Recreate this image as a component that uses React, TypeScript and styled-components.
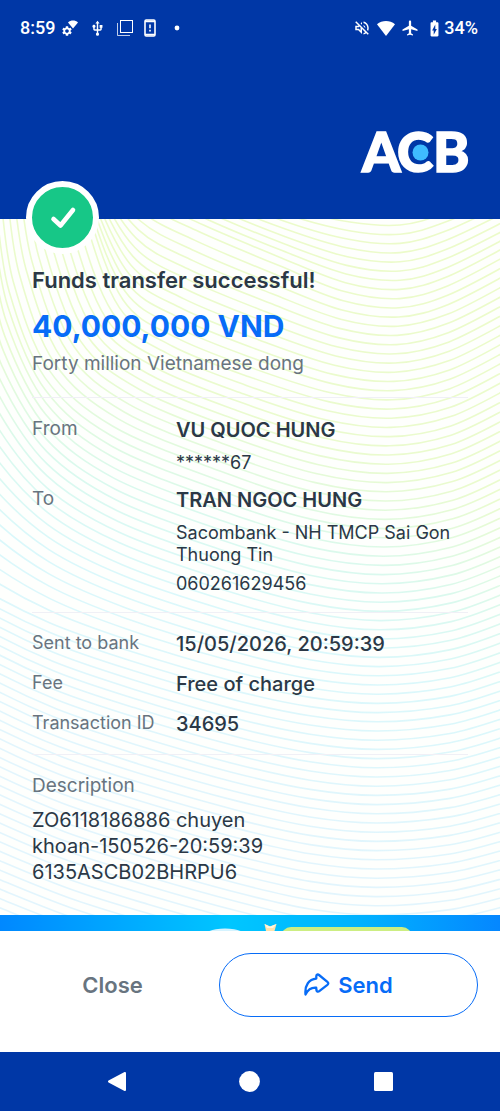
import React from "react";
import styled, { createGlobalStyle, css } from "styled-components";
import { MdAirplanemodeActive, MdBatteryChargingFull, MdOutlineVolumeOff, MdSettings, MdUsb } from "react-icons/md";

const color = {
  navy: "#0037a6",
  blue: "#076cf7",
  ink: "#2b3846",
  muted: "#68747f",
  line: "#f0f0f6",
  green: "#17c787",
  dot: "#3fbcff",
};

const GlobalStyle = createGlobalStyle`
  *, *::before, *::after { box-sizing: border-box; }
  body { margin: 0; background: #fff; font-family: Inter, "Liberation Sans", sans-serif; color: ${color.ink}; }
  h1, p, dl, dd { margin: 0; }
  button { font: inherit; border: 0; padding: 0; background: none; cursor: pointer; }
  svg { display: block; }
`;

const Screen = styled.div`
  display: flex;
  flex-direction: column;
  min-height: 100vh;
`;

const Header = styled.header`
  display: flex;
  flex-direction: column;
  background: ${color.navy};
  color: #fff;
`;

const StatusBar = styled.div`
  display: flex;
  justify-content: space-between;
  align-items: center;
  height: 56px;
  padding: 0 22px 0 20px;
  font-size: 18px;
  font-weight: 500;
  line-height: 20px;
  font-family: Roboto, Inter, sans-serif;
`;

const StatusGroup = styled.div<{ $gap: number }>`
  display: flex;
  align-items: center;
  gap: ${({ $gap }) => $gap}px;
`;

const TimeGroup = styled.div`
  display: flex;
  align-items: center;
  gap: 7px;
`;

const BatteryGroup = styled.div`
  display: flex;
  align-items: center;
`;

const Brand = styled.div`
  display: flex;
  justify-content: flex-end;
  padding: 60px 28px 31px;
`;

const Receipt = styled.main`
  position: relative;
  flex: 1;
  padding: 48px 32px 30px;
  background: #fefffd;
`;

const WaveLayer = styled.svg`
  position: absolute;
  inset: 0;
  width: 100%;
  height: 100%;
`;

const SuccessBadge = styled.div`
  position: absolute;
  top: -38px;
  left: 26px;
  display: grid;
  place-items: center;
  width: 73px;
  height: 73px;
  border: 6px solid #fff;
  border-radius: 50%;
  background: ${color.green};
`;

const Content = styled.div`
  position: relative;
`;

const Title = styled.h1`
  font-size: 22px;
  font-weight: 600;
  line-height: 26px;
`;

const Amount = styled.p`
  margin-top: 15px;
  font-size: 30px;
  font-weight: 700;
  line-height: 36px;
  color: ${color.blue};
`;

const Words = styled.p`
  margin-top: 8px;
  font-size: 19px;
  line-height: 24px;
  color: ${color.muted};
`;

const section = css`
  border-top: 1px solid ${color.line};
  padding: 19px 0 17px;
`;

const Parties = styled.dl`
  ${section}
  display: grid;
  gap: 13px;
  margin-top: 21px;
`;

const Facts = styled.dl`
  ${section}
  padding-top: 18px;
  display: grid;
  gap: 14px;
`;

const Note = styled.dl`
  ${section}
  padding-bottom: 0;
`;

const Row = styled.div`
  display: grid;
  grid-template-columns: 144px 1fr;
`;

const Label = styled.dt<{ $small?: boolean }>`
  font-size: ${({ $small }) => ($small ? 18 : 19)}px;
  line-height: 24px;
  color: ${color.muted};
`;

const Party = styled.dd`
  display: grid;
`;

const PartyName = styled.span`
  font-size: 20px;
  font-weight: 600;
  line-height: 26px;
  margin-bottom: 2px;
`;

const PartyLine = styled.span`
  margin-top: 7px;
  font-size: 18px;
  line-height: 22px;
`;

const Fact = styled.dd`
  font-size: 20px;
  font-weight: 500;
  line-height: 26px;
`;

const NoteText = styled.dd`
  margin-top: 9px;
  font-size: 20px;
  line-height: 26px;
`;

const Banner = styled.svg`
  width: 100%;
  height: 16px;
`;

const Actions = styled.footer`
  display: grid;
  grid-template-columns: 213fr 259fr;
  padding: 22px 22px 35px 6px;
  background: #fff;
`;

const ActionButton = styled.button<{ $outlined?: boolean }>`
  display: flex;
  align-items: center;
  justify-content: center;
  gap: 8px;
  height: 64px;
  border-radius: 32px;
  font-size: 22px;
  font-weight: 600;
  color: ${({ $outlined }) => ($outlined ? color.blue : color.muted)};
  ${({ $outlined }) => $outlined && css`border: 1px solid ${color.blue};`}
`;

const NavBar = styled.nav`
  display: flex;
  height: 59px;
  padding: 0 50px;
  background: ${color.navy};
`;

const NavButton = styled.button`
  flex: 1;
  display: grid;
  place-items: center;
`;

type Point = [number, number];
type KeyCurve = { level: number; points: Point[] };

const keyCurves: KeyCurve[] = [
  { level: 225, points: [[120, 60], [150, 120], [185, 158], [230, 185], [290, 208], [350, 222], [400, 225], [445, 213], [510, 184]] },
  { level: 295, points: [[80, 100], [105, 160], [145, 200], [200, 228], [280, 262], [345, 288], [400, 295], [448, 282], [510, 250]] },
  { level: 405, points: [[70, 130], [86, 210], [122, 305], [175, 343], [250, 373], [330, 398], [392, 405], [450, 394], [510, 364]] },
  { level: 515, points: [[-2, 205], [10, 285], [45, 372], [110, 430], [220, 476], [310, 505], [385, 515], [453, 505], [510, 480]] },
  { level: 705, points: [[-60, 560], [-20, 590], [50, 625], [130, 653], [230, 682], [310, 699], [378, 705], [450, 698], [510, 680]] },
  { level: 970, points: [[-30, 856], [0, 870], [70, 898], [150, 923], [240, 948], [310, 964], [375, 970], [450, 965], [510, 952]] },
];

const curveAt = (level: number): Point[] => {
  let i = 0;
  while (i < keyCurves.length - 2 && level > keyCurves[i + 1].level) i++;
  const a = keyCurves[i];
  const b = keyCurves[i + 1];
  const t = (level - a.level) / (b.level - a.level);
  return a.points.map(([x, y], k): Point => [x + (b.points[k][0] - x) * t, y + (b.points[k][1] - y) * t]);
};

const smoothPath = (p: Point[]) => {
  let d = `M${p[0][0].toFixed(1)} ${p[0][1].toFixed(1)}`;
  for (let i = 0; i < p.length - 1; i++) {
    const prev = p[Math.max(i - 1, 0)];
    const next = p[Math.min(i + 2, p.length - 1)];
    const c = [
      p[i][0] + (p[i + 1][0] - prev[0]) / 6,
      p[i][1] + (p[i + 1][1] - prev[1]) / 6,
      p[i + 1][0] - (next[0] - p[i][0]) / 6,
      p[i + 1][1] - (next[1] - p[i][1]) / 6,
      p[i + 1][0],
      p[i + 1][1],
    ];
    d += `C${c.map((n) => n.toFixed(1)).join(" ")}`;
  }
  return d;
};

const wavePath = Array.from({ length: 92 }, (_, k) => smoothPath(curveAt(225 + k * 9.2))).join("");

const Waves = () => (
  <WaveLayer viewBox="0 219 500 696" preserveAspectRatio="xMidYMin slice" aria-hidden="true">
    <defs>
      <linearGradient id="wave" gradientUnits="userSpaceOnUse" x1="330" y1="219" x2="130" y2="800">
        <stop offset="0" stopColor="#ecfbca" />
        <stop offset="0.34" stopColor="#eafbce" />
        <stop offset="0.52" stopColor="#daf9ee" />
        <stop offset="0.66" stopColor="#daf8fb" />
        <stop offset="1" stopColor="#e2f5fd" />
      </linearGradient>
    </defs>
    <path d={wavePath} fill="none" stroke="url(#wave)" strokeWidth="1.6" />
  </WaveLayer>
);

const GearWifiIcon = () => (
  <svg width="16" height="16" viewBox="0 0 16 16" fill="#fff" aria-hidden="true">
    <MdSettings x={-1} y={5} size={12} />
    <path d="M6 2.4C8.9-.2 13.1-.2 16 2.4L11 8.4Z" />
  </svg>
);

const WindowsIcon = () => (
  <svg width="16" height="16" viewBox="0 0 16 16" fill="none" stroke="#fff" aria-hidden="true">
    <rect x="3.5" y="0.5" width="12" height="12" />
    <path d="M0.5 3v12.5H13" opacity="0.75" />
  </svg>
);

const PhoneAlertIcon = () => (
  <svg width="12" height="18" viewBox="0 0 12 18" aria-hidden="true">
    <rect x="1" y="1" width="10" height="16" rx="1.2" fill="none" stroke="#fff" strokeWidth="1.6" />
    <path d="M1 2.4h10M1 15.6h10" stroke="#fff" strokeWidth="1.8" />
    <path d="M6 5.5v3.8M6 10.7v1.8" stroke="#fff" strokeWidth="1.6" />
  </svg>
);

const WifiIcon = () => (
  <svg width="18" height="15" viewBox="0 0 18 15" aria-hidden="true">
    <path d="M0 3.2C5.2-1 12.8-1 18 3.2L9 15Z" fill="#fff" />
  </svg>
);

const Logo = () => (
  <svg width="112" height="72" viewBox="0 0 112 72" role="img" aria-label="ACB">
    <g
      fill="#fff"
      stroke="#fff"
      strokeWidth="1.5"
      fontFamily="Lato, sans-serif"
      fontWeight="900"
      fontSize="55"
    >
      <text x="2" y="56">A</text>
      <text x="37" y="56">C</text>
      <text x="73" y="56">B</text>
    </g>
    <circle cx="60.5" cy="36.5" r="8" fill={color.dot} />
  </svg>
);

const CheckIcon = () => (
  <svg width="28" height="26" viewBox="0 0 28 26" fill="none" aria-hidden="true">
    <path d="M4.5 14L11.5 20.5L24 5" stroke="#fff" strokeWidth="4.6" strokeLinecap="round" strokeLinejoin="round" />
  </svg>
);

const ShareIcon = () => (
  <svg width="26" height="24" viewBox="0 0 26 24" fill="none" aria-hidden="true">
    <path
      d="M1.5 21.5C.6 12 5 6.3 12.3 5.6V3.2C12.3 1.5 13.8 1 15 2L23.4 8.8C24.6 9.8 24.6 10.8 23.4 11.8L15.3 18.2C14 19.2 12.6 18.6 12.4 17L12.2 14.7C7.6 14.3 4 16.5 1.5 21.5Z"
      stroke={color.blue}
      strokeWidth="2.3"
      strokeLinejoin="round"
    />
  </svg>
);

const PromoBanner = () => (
  <Banner viewBox="0 0 500 16" preserveAspectRatio="xMidYMin slice" aria-hidden="true">
    <defs>
      <linearGradient id="promo">
        <stop offset="0" stopColor="#0088ff" />
        <stop offset="0.46" stopColor="#00c6ff" />
        <stop offset="0.72" stopColor="#00b2ff" />
        <stop offset="1" stopColor="#0587ff" />
      </linearGradient>
    </defs>
    <rect width="500" height="16" fill="url(#promo)" />
    <ellipse cx="225" cy="24" rx="24" ry="10.5" fill="#d5f3ff" />
    <path d="M264.5 9L270 11.5L276.5 9L274.5 16H266Z" fill="#ffe3ad" />
    <path d="M264.5 9L270 11.5L276.5 9L273 13H267Z" fill="#fff6df" />
    <rect x="281" y="12" width="131" height="30" rx="10" fill="#cdee82" />
  </Banner>
);

const parties = [
  { label: "From", name: "VU QUOC HUNG", lines: ["******67"] },
  { label: "To", name: "TRAN NGOC HUNG", lines: ["Sacombank - NH TMCP Sai Gon Thuong Tin", "060261629456"] },
];

const facts = [
  { label: "Sent to bank", value: "15/05/2026, 20:59:39" },
  { label: "Fee", value: "Free of charge" },
  { label: "Transaction ID", value: "34695" },
];

export default function App() {
  return (
    <Screen>
      <GlobalStyle />
      <Header>
        <StatusBar>
          <StatusGroup $gap={11}>
            <TimeGroup>
              <span>8:59</span>
              <GearWifiIcon />
            </TimeGroup>
            <MdUsb size={17} />
            <WindowsIcon />
            <PhoneAlertIcon />
            <svg width="41" height="6" viewBox="0 0 41 6" aria-hidden="true">
              <circle cx="10" cy="3" r="2.4" fill="#fff" />
            </svg>
          </StatusGroup>
          <StatusGroup $gap={6}>
            <MdOutlineVolumeOff size={18} />
            <WifiIcon />
            <MdAirplanemodeActive size={18} />
            <BatteryGroup>
              <MdBatteryChargingFull size={19} />
              <span>34%</span>
            </BatteryGroup>
          </StatusGroup>
        </StatusBar>
        <Brand>
          <Logo />
        </Brand>
      </Header>
      <Receipt>
        <Waves />
        <SuccessBadge>
          <CheckIcon />
        </SuccessBadge>
        <Content>
          <Title>Funds transfer successful!</Title>
          <Amount>40,000,000 VND</Amount>
          <Words>Forty million Vietnamese dong</Words>
          <Parties>
            {parties.map((party) => (
              <Row key={party.label}>
                <Label>{party.label}</Label>
                <Party>
                  <PartyName>{party.name}</PartyName>
                  {party.lines.map((line) => (
                    <PartyLine key={line}>{line}</PartyLine>
                  ))}
                </Party>
              </Row>
            ))}
          </Parties>
          <Facts>
            {facts.map((fact) => (
              <Row key={fact.label}>
                <Label $small>{fact.label}</Label>
                <Fact>{fact.value}</Fact>
              </Row>
            ))}
          </Facts>
          <Note>
            <Label>Description</Label>
            <NoteText>
              ZO6118186886 chuyen
              <br />
              khoan-150526-20:59:39
              <br />
              6135ASCB02BHRPU6
            </NoteText>
          </Note>
        </Content>
      </Receipt>
      <PromoBanner />
      <Actions>
        <ActionButton type="button">Close</ActionButton>
        <ActionButton type="button" $outlined>
          <ShareIcon />
          Send
        </ActionButton>
      </Actions>
      <NavBar>
        <NavButton type="button" aria-label="Back">
          <svg width="20" height="21" viewBox="0 0 20 21" aria-hidden="true">
            <path d="M2 10.5L18 2V19Z" fill="#fff" stroke="#fff" strokeWidth="2" strokeLinejoin="round" />
          </svg>
        </NavButton>
        <NavButton type="button" aria-label="Home">
          <svg width="21" height="21" viewBox="0 0 21 21" aria-hidden="true">
            <circle cx="10.5" cy="10.5" r="10.4" fill="#fff" />
          </svg>
        </NavButton>
        <NavButton type="button" aria-label="Recent apps">
          <svg width="19" height="19" viewBox="0 0 19 19" aria-hidden="true">
            <rect width="19" height="19" rx="1.5" fill="#fff" />
          </svg>
        </NavButton>
      </NavBar>
    </Screen>
  );
}
